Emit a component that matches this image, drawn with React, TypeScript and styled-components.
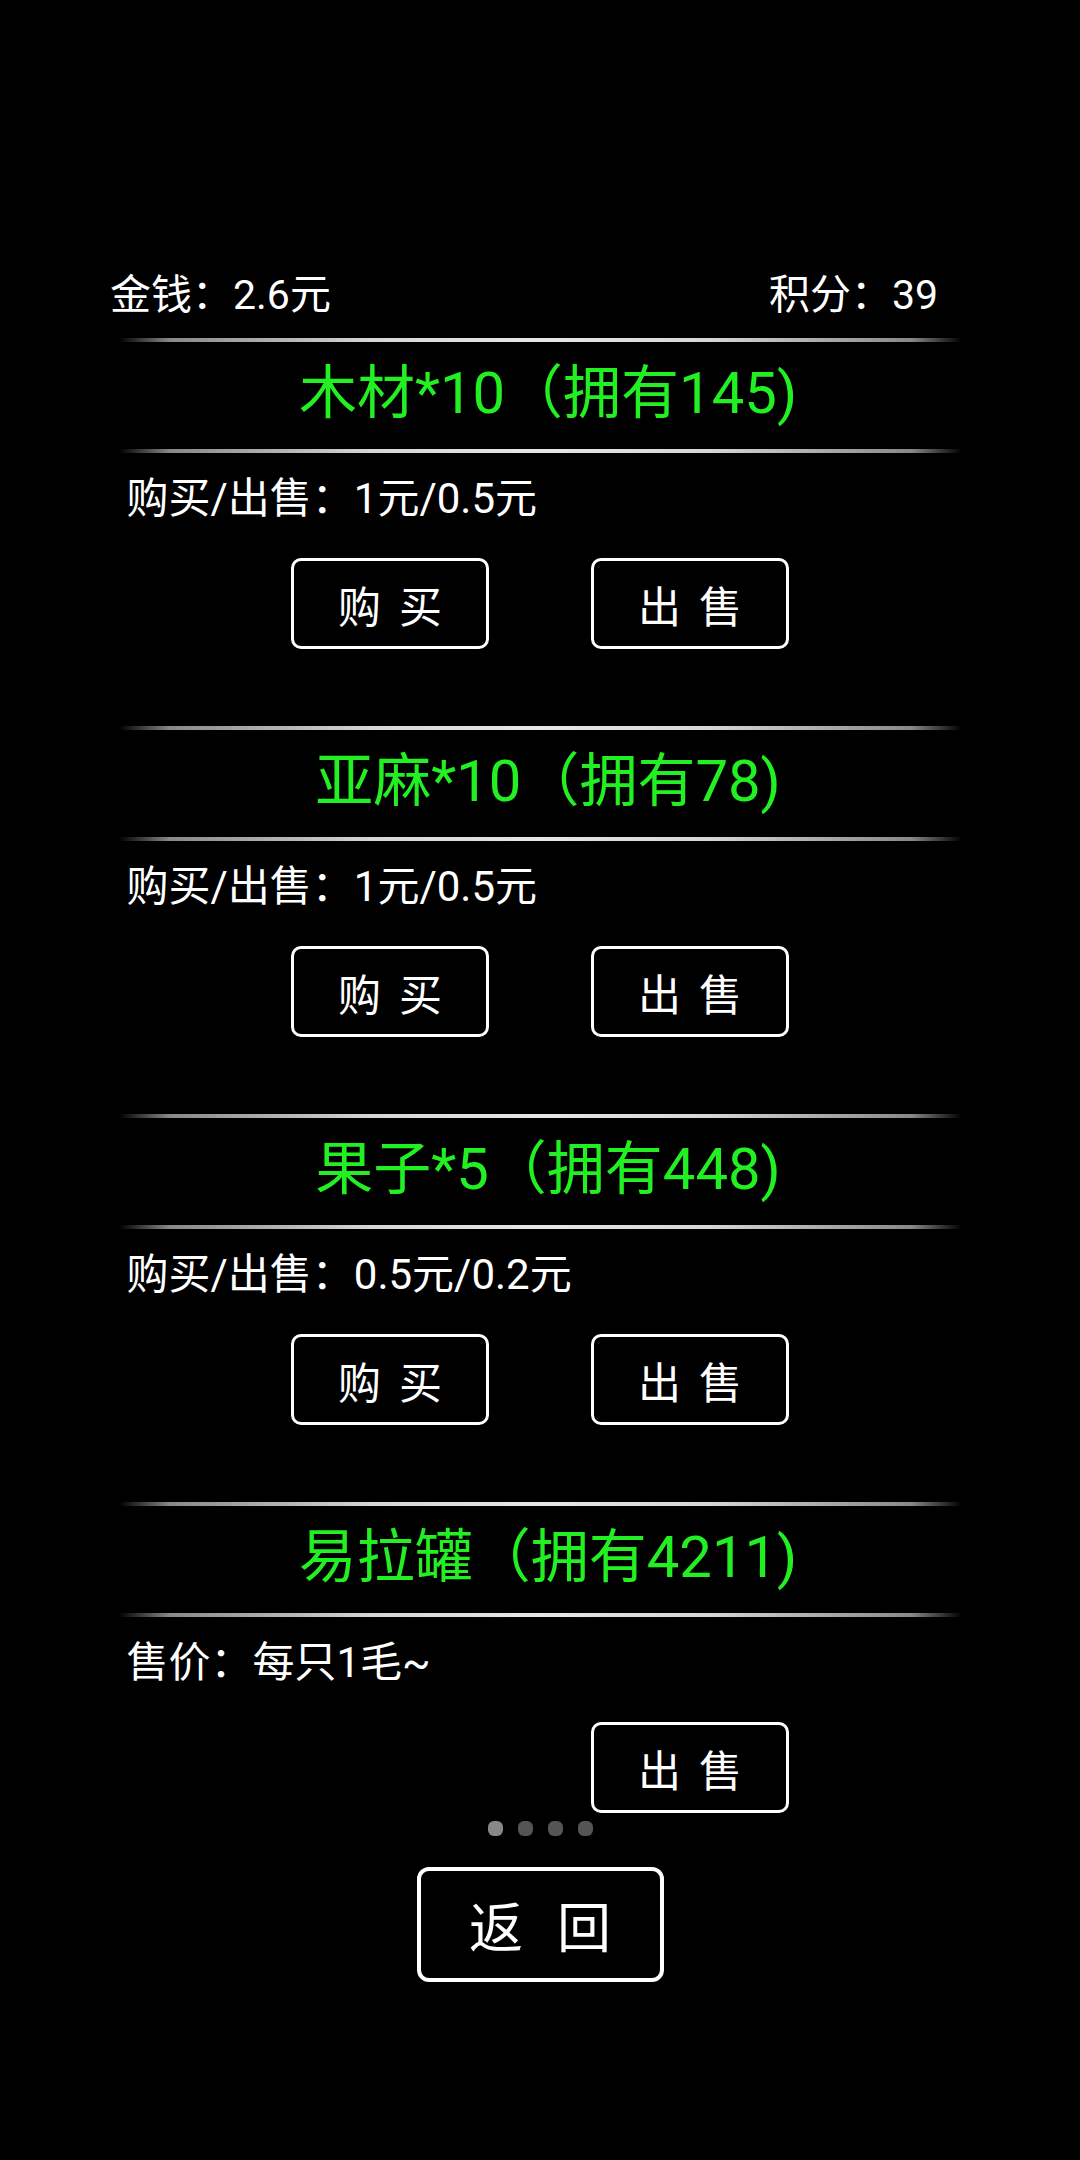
import React from "react";
import styled, { createGlobalStyle } from "styled-components";

const Global = createGlobalStyle`
  html, body { margin: 0; padding: 0; background: #000; }
  body { font-family: Roboto, "Noto Sans CJK SC", "Noto Sans", sans-serif; }
`;

const Page = styled.div`
  width: 1080px;
  height: 2160px;
  background: #000;
  color: #fff;
  display: flex;
  flex-direction: column;
  align-items: center;
  box-sizing: border-box;
  padding-top: 272px;
`;

const Header = styled.div`
  width: 100%;
  box-sizing: border-box;
  padding: 0 142px 0 110px;
  display: flex;
  justify-content: space-between;
  font-size: 41px;
  line-height: 47px;
`;

const Column = styled.div`
  width: 843px;
  margin-top: 19px;
  display: flex;
  flex-direction: column;
`;

const Divider = styled.div`
  height: 4px;
  border-radius: 2px;
  background: linear-gradient(
    to right,
    rgba(120, 120, 120, 0) 0%,
    rgba(170, 170, 170, 0.8) 6%,
    #d6d6d6 30%,
    #e6e6e6 50%,
    #d6d6d6 70%,
    rgba(170, 170, 170, 0.8) 94%,
    rgba(120, 120, 120, 0) 100%
  );
`;

const Section = styled.section<{ $last?: boolean }>`
  display: flex;
  flex-direction: column;
  padding-bottom: ${(p) => (p.$last ? "8px" : "77px")};
`;

const Title = styled.div`
  height: 107px;
  padding: 0 0 5px 16px;
  box-sizing: border-box;
  display: flex;
  align-items: center;
  justify-content: center;
  color: #22f022;
  font-size: 58px;
  line-height: 1;
`;

const Price = styled.div`
  margin-top: 24px;
  padding-left: 8px;
  font-size: 42px;
  line-height: 44px;
`;

const ButtonRow = styled.div`
  margin-top: 37px;
  display: flex;
  justify-content: center;
  gap: 102px;
`;

const ActionButton = styled.button<{ $hidden?: boolean }>`
  width: 198px;
  height: 91px;
  box-sizing: border-box;
  border: 3.5px solid #fff;
  border-radius: 10px;
  background: #000;
  color: #fff;
  font-family: inherit;
  font-size: 43px;
  letter-spacing: 18px;
  padding: 0 0 0 18px;
  display: flex;
  align-items: center;
  justify-content: center;
  visibility: ${(p) => (p.$hidden ? "hidden" : "visible")};
`;

const Dots = styled.div`
  display: flex;
  gap: 15px;
  justify-content: center;
`;

const Dot = styled.span<{ $active?: boolean }>`
  width: 15px;
  height: 15px;
  border-radius: 6px;
  background: ${(p) => (p.$active ? "#888" : "#555")};
`;

const BackButton = styled.button`
  margin-top: 31px;
  width: 247px;
  height: 115px;
  box-sizing: border-box;
  border: 4px solid #fff;
  border-radius: 12px;
  background: #000;
  color: #fff;
  font-family: inherit;
  font-size: 54px;
  letter-spacing: 34px;
  padding: 0 0 0 34px;
  display: flex;
  align-items: center;
  justify-content: center;
`;

type Item = { title: string; price: string; canBuy: boolean };

const items: Item[] = [
  { title: "木材*10（拥有145)", price: "购买/出售：1元/0.5元", canBuy: true },
  { title: "亚麻*10（拥有78)", price: "购买/出售：1元/0.5元", canBuy: true },
  { title: "果子*5（拥有448)", price: "购买/出售：0.5元/0.2元", canBuy: true },
  { title: "易拉罐（拥有4211)", price: "售价：每只1毛~", canBuy: false },
];

export default function App() {
  return (
    <>
      <Global />
      <Page>
        <Header>
          <span>金钱：2.6元</span>
          <span>积分：39</span>
        </Header>
        <Column>
          {items.map((it, i) => (
            <Section key={i} $last={i === items.length - 1}>
              <Divider />
              <Title>{it.title}</Title>
              <Divider />
              <Price>{it.price}</Price>
              <ButtonRow>
                <ActionButton $hidden={!it.canBuy}>购买</ActionButton>
                <ActionButton>出售</ActionButton>
              </ButtonRow>
            </Section>
          ))}
        </Column>
        <Dots>
          <Dot $active />
          <Dot />
          <Dot />
          <Dot />
        </Dots>
        <BackButton>返回</BackButton>
      </Page>
    </>
  );
}
